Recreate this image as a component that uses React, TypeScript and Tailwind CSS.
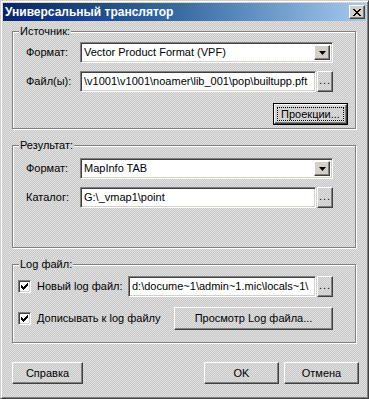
import type { ReactNode } from "react";

const raised =
  "border border-t-white border-l-white border-r-[#404040] border-b-[#404040] shadow-[inset_-1px_-1px_0_#808080]";
const sunken =
  "border border-t-[#808080] border-l-[#808080] border-r-white border-b-white shadow-[inset_1px_1px_0_#404040,inset_-1px_-1px_0_#d4d0c8]";
const dither =
  "bg-[image:repeating-conic-gradient(#c8c8c8_0%_25%,#e0e0e0_0%_50%)] bg-[length:2px_2px]";

function Group({ title, className, children }: { title: string; className: string; children: ReactNode }) {
  return (
    <div
      className={`relative ml-[9px] w-[344px] border border-[#808080] shadow-[inset_1px_1px_0_#fff,1px_1px_0_#fff] ${className}`}
    >
      <span className={`absolute left-[6px] -top-[7px] px-[1px] leading-[13px] ${dither}`}>{title}</span>
      {children}
    </div>
  );
}

function Button({ className, children }: { className: string; children: ReactNode }) {
  return (
    <div className={`flex items-center justify-center ${raised} ${className}`}>{children}</div>
  );
}

function Browse() {
  return (
    <Button className="w-[16px] h-[21px] ml-[1px]">
      <span className="-mt-[3px] tracking-[1px]">...</span>
    </Button>
  );
}

function Combo({ value }: { value: string }) {
  return (
    <div className={`flex w-[253px] h-[21px] bg-white ${sunken} p-[2px]`}>
      <div className="flex-1 pl-[1px] leading-[15px] whitespace-nowrap overflow-hidden">{value}</div>
      <div className={`flex w-[16px] items-center justify-center bg-[#d4d0c8] ${raised}`}>
        <svg width="7" height="4" viewBox="0 0 7 4">
          <path d="M0 0h7L3.5 4z" fill="#000" />
        </svg>
      </div>
    </div>
  );
}

function TextBox({ value, className }: { value: string; className: string }) {
  return (
    <div
      className={`h-[21px] bg-white ${sunken} pl-[3px] leading-[19px] whitespace-nowrap overflow-hidden ${className}`}
    >
      {value}
    </div>
  );
}

function Check({ label }: { label: string }) {
  return (
    <div className="flex items-center">
      <div className={`flex w-[13px] h-[13px] items-center justify-center bg-white ${sunken}`}>
        <svg width="7" height="7" viewBox="0 0 7 7" shapeRendering="crispEdges">
          <path
            d="M6 0h1v3h-1zM5 1h1v3h-1zM4 2h1v3h-1zM3 3h1v3h-1zM2 4h1v3h-1zM1 3h1v3h-1zM0 2h1v3h-1z"
            fill="#000"
          />
        </svg>
      </div>
      <span className="ml-[6px]">{label}</span>
    </div>
  );
}

export default function App() {
  return (
    <div
      className={`flex flex-col w-[369px] h-[399px] p-[2px] font-['Liberation_Sans',Arial,sans-serif] text-[11px] leading-[13px] text-black border border-t-[#d4d0c8] border-l-[#d4d0c8] border-r-[#404040] border-b-[#404040] shadow-[inset_1px_1px_0_#fff,inset_-1px_-1px_0_#808080] ${dither}`}
    >
      <div className="flex items-center h-[18px] pl-[2px] pr-[1px] bg-linear-to-r from-[#0a246a] via-[#3a6ea5] to-[#a6caf0]">
        <span className="flex-1 text-white font-bold text-[12px] leading-[14px]">Универсальный транслятор</span>
        <div className={`flex w-[16px] h-[14px] items-center justify-center bg-[#d4d0c8] ${raised}`}>
          <svg width="8" height="7" viewBox="0 0 8 7" shapeRendering="crispEdges">
            <path
              d="M0 0h2v1h-2zM6 0h2v1h-2zM1 1h2v1h-2zM5 1h2v1h-2zM2 2h4v1h-4zM3 3h2v1h-2zM2 4h4v1h-4zM1 5h2v1h-2zM5 5h2v1h-2zM0 6h2v1h-2zM6 6h2v1h-2z"
              fill="#000"
            />
          </svg>
        </div>
      </div>

      <Group title="Источник:" className="mt-[10px] h-[98px] pl-[13px] pt-[10px]">
        <div className="flex items-center">
          <span className="w-[54px]">Формат:</span>
          <Combo value="Vector Product Format (VPF)" />
        </div>
        <div className="flex items-center mt-[8px]">
          <span className="w-[54px]">Файл(ы):</span>
          <TextBox className="w-[236px]" value={"\\v1001\\v1001\\noamer\\lib_001\\pop\\builtupp.pft"} />
          <Browse />
        </div>
        <div className="flex justify-end mt-[11px] pr-[7px]">
          <div className="flex w-[75px] h-[22px] border border-black">
            <div className={`flex flex-1 p-[2px] ${raised}`}>
              <div className="flex flex-1 items-center justify-center border border-dotted border-black">
                Проекции...
              </div>
            </div>
          </div>
        </div>
      </Group>

      <Group title="Результат:" className="mt-[16px] h-[103px] pl-[13px] pt-[12px]">
        <div className="flex items-center">
          <span className="w-[54px]">Формат:</span>
          <Combo value="MapInfo TAB" />
        </div>
        <div className="flex items-center mt-[8px]">
          <span className="w-[54px]">Каталог:</span>
          <TextBox className="w-[236px]" value={"G:\\_vmap1\\point"} />
          <Browse />
        </div>
      </Group>

      <Group title="Log файл:" className="mt-[16px] h-[79px] pl-[5px] pt-[11px]">
        <div className="flex items-center">
          <div className="w-[110px]">
            <Check label="Новый log файл:" />
          </div>
          <TextBox className="w-[188px]" value={"d:\\docume~1\\admin~1.mic\\locals~1\\"} />
          <Browse />
        </div>
        <div className="flex items-center mt-[10px]">
          <div className="w-[156px]">
            <Check label="Дописывать к log файлу" />
          </div>
          <Button className="w-[159px] h-[23px]">Просмотр Log файла...</Button>
        </div>
      </Group>

      <div className="flex justify-between mt-[19px] ml-[9px] mr-[7px]">
        <Button className="w-[71px] h-[22px]">Справка</Button>
        <div className="flex gap-[5px]">
          <Button className="w-[75px] h-[22px]">OK</Button>
          <Button className="w-[75px] h-[22px]">Отмена</Button>
        </div>
      </div>
    </div>
  );
}
